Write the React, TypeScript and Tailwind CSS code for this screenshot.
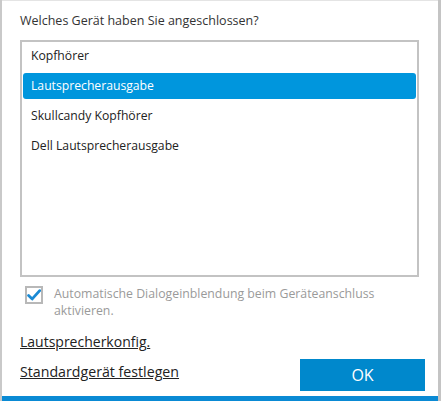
import React from "react";

const devices = [
  "Kopfhörer",
  "Lautsprecherausgabe",
  "Skullcandy Kopfhörer",
  "Dell Lautsprecherausgabe",
];

const App: React.FC = () => {
  const selected = 1;
  return (
    <div className="w-[441px] h-[401px] bg-white flex overflow-hidden font-['Segoe_UI','Open_Sans',sans-serif] text-[12px]">
      <div className="w-[2px] bg-[#c9c9c9]" />
      <div className="flex-1 flex flex-col">
        <div className="h-[1px] bg-[#e4e4e4]" />
        <div className="flex-1 flex flex-col pl-[18px] pr-[13px]">
          <p className="mt-[11px] h-[18px] leading-[18px] text-[12.5px] text-[#333]">
            Welches Gerät haben Sie angeschlossen?
          </p>
          <div className="mt-[10px] mr-[6px] h-[237px] border-2 border-[#c3c3c3] flex flex-col gap-[4px] px-[1px] pt-[1px]">
            {devices.map((d, i) => (
              <div
                key={d}
                className={
                  i === selected
                    ? "h-[26px] leading-[26px] px-[8px] rounded-[3px] bg-[#0096dd] text-white text-[12.2px]"
                    : "h-[26px] leading-[26px] px-[8px] text-[#222] text-[12.2px]"
                }
              >
                {d}
              </div>
            ))}
          </div>
          <div className="mt-[8px] flex gap-[11px] pl-[5px]">
            <div className="w-[18px] h-[18px] mt-[1px] border-2 border-[#b8b8b8] flex items-center justify-center shrink-0">
              <svg width="16" height="14" viewBox="0 0 16 14">
                <path
                  d="M1.8 7.5 L6 11.5 L14.5 2"
                  fill="none"
                  stroke="#1a8ad4"
                  strokeWidth="3.2"
                  strokeLinecap="round"
                  strokeLinejoin="round"
                />
              </svg>
            </div>
            <p className="leading-[17px] text-[#9a9a9a] text-[12.3px] w-[345px]">
              Automatische Dialogeinblendung beim Geräteanschluss aktivieren.
            </p>
          </div>
          <a className="mt-[14px] self-start underline text-[#222] leading-[18px] h-[18px] text-[14px]">
            Lautsprecherkonfig.
          </a>
          <div className="mt-[8px] flex items-start justify-between">
            <a className="mt-[4px] underline text-[#222] leading-[18px] text-[14.2px]">
              Standardgerät festlegen
            </a>
            <button className="w-[125px] h-[32px] bg-[#0088cc] text-white text-[16px]">
              OK
            </button>
          </div>
        </div>
        <div className="h-[5px] bg-[#0a8ad4] mt-auto" />
      </div>
      <div className="w-[3px] bg-[#c4c4c4]" />
    </div>
  );
};

export default App;
